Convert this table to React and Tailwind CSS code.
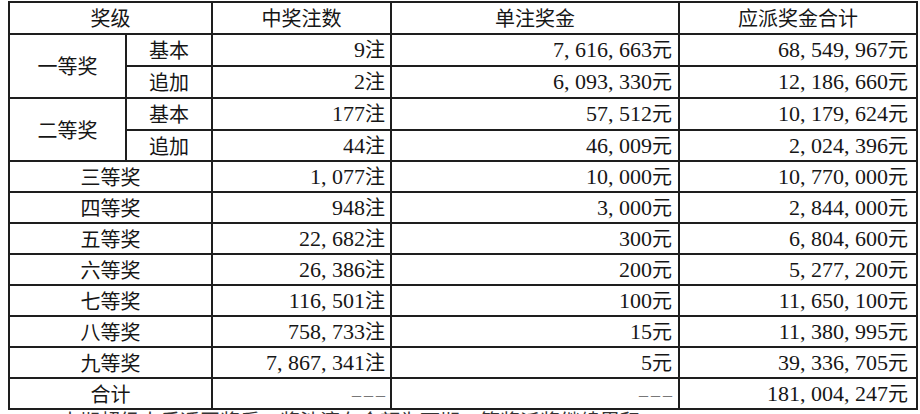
import React from "react";

const rows = [
  { level: "一等奖", sub: "基本", count: "9", prize: "7,616,663", total: "68,549,967", span: true },
  { sub: "追加", count: "2", prize: "6,093,330", total: "12,186,660" },
  { level: "二等奖", sub: "基本", count: "177", prize: "57,512", total: "10,179,624", span: true },
  { sub: "追加", count: "44", prize: "46,009", total: "2,024,396" },
  { level: "三等奖", count: "1,077", prize: "10,000", total: "10,770,000" },
  { level: "四等奖", count: "948", prize: "3,000", total: "2,844,000" },
  { level: "五等奖", count: "22,682", prize: "300", total: "6,804,600" },
  { level: "六等奖", count: "26,386", prize: "200", total: "5,277,200" },
  { level: "七等奖", count: "116,501", prize: "100", total: "11,650,100" },
  { level: "八等奖", count: "758,733", prize: "15", total: "11,380,995" },
  { level: "九等奖", count: "7,867,341", prize: "5", total: "39,336,705" },
];

// row heights measured from the picture
const heights = ["h-[32px]", "h-[32px]", "h-[32px]", "h-[31px]", "h-[31px]", "h-[31px]", "h-[31px]", "h-[31px]", "h-[31px]", "h-[31px]", "h-[31px]", "h-[31px]"];

// numbers with wide, song-style commas
function Num({ value, unit }) {
  return (
    <span className="whitespace-nowrap">
      {value.split("").map((c, i) =>
        c === "," ? (
          <span key={i} className="inline-block w-[11px] text-left font-['Liberation_Serif'] text-[22px]">,</span>
        ) : (
          <span key={i} className="font-['Liberation_Serif'] text-[22px]">{c}</span>
        )
      )}
      <span className="text-[20px]">{unit}</span>
    </span>
  );
}

const cell = "border-2 border-[#1e1e1e] p-0 align-middle";
const dash = "font-['Liberation_Serif'] text-[18px] text-[#777] tracking-[3px]";

export default function App() {
  return (
    <div className="w-[920px] h-[414px] overflow-hidden bg-white text-[#161616] font-['Noto_Sans_CJK_SC',sans-serif] text-[20px] leading-none">
      <table className="ml-[8px] mt-px table-fixed border-collapse w-[908px]">
        <colgroup>
          <col className="w-[117px]" />
          <col className="w-[86px]" />
          <col className="w-[179px]" />
          <col className="w-[288px]" />
          <col className="w-[238px]" />
        </colgroup>
        <thead>
          <tr className="h-[32px]">
            <th colSpan={2} className={`${cell} font-normal text-center`}>奖级</th>
            <th className={`${cell} font-normal text-center`}>中奖注数</th>
            <th className={`${cell} font-normal text-center`}>单注奖金</th>
            <th className={`${cell} font-normal text-center`}>应派奖金合计</th>
          </tr>
        </thead>
        <tbody>
          {rows.map((r, i) => (
            <tr key={i} className={heights[i]}>
              {r.span && (
                <td rowSpan={2} className={`${cell} text-center`}>{r.level}</td>
              )}
              {r.sub ? (
                <td className={`${cell} text-center`}>{r.sub}</td>
              ) : (
                <td colSpan={2} className={`${cell} text-center`}>{r.level}</td>
              )}
              <td className={`${cell} text-right pr-[5px]`}><Num value={r.count} unit="注" /></td>
              <td className={`${cell} text-right pr-[6px]`}><Num value={r.prize} unit="元" /></td>
              <td className={`${cell} text-right pr-[8px]`}><Num value={r.total} unit="元" /></td>
            </tr>
          ))}
          <tr className="h-[31px]">
            <td colSpan={2} className={`${cell} text-center`}>合计</td>
            <td className={`${cell} text-right pr-[2px]`}><span className={dash}>–––</span></td>
            <td className={`${cell} text-right pr-[3px]`}><span className={dash}>–––</span></td>
            <td className={`${cell} text-right pr-[8px]`}><Num value="181,004,247" unit="元" /></td>
          </tr>
        </tbody>
      </table>
      <p className="mt-px pl-[60px] text-[20px] text-[#333] whitespace-nowrap">本期超级大乐透开奖后，奖池滚存金额为下期一等奖派奖继续累积。</p>
    </div>
  );
}
